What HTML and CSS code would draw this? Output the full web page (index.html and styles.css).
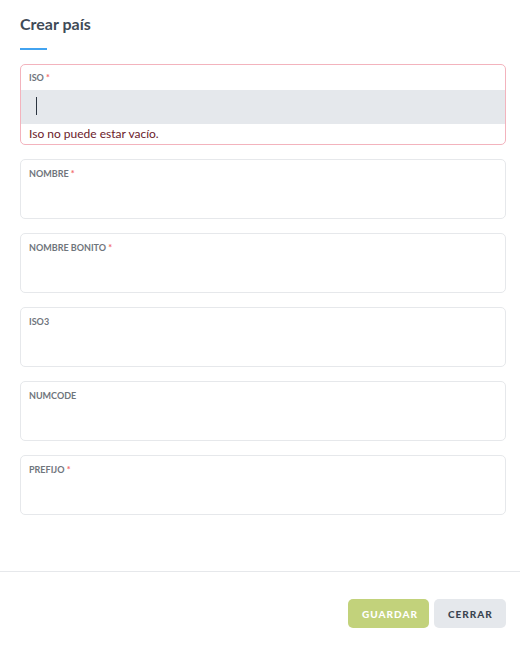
FILE: index.html
```html
<!DOCTYPE html>
<html lang="es">
<head>
    <meta charset="UTF-8">
    <meta name="viewport" content="width=device-width, initial-scale=1.0">
    <title>Crear país</title>
    <link rel="stylesheet" href="styles.css">
</head>
<body>
    <div class="modal">
        <div class="modal-body">
            <h2 class="modal-title">Crear país</h2>
            <div class="title-bar"></div>
            <form class="fields">
                <div class="field has-error">
                    <label for="iso">ISO <span class="req">*</span></label>
                    <div class="input-wrap"><input type="text" id="iso"><span class="caret"></span></div>
                    <div class="error-text">Iso no puede estar vacío.</div>
                </div>
                <div class="field">
                    <label for="nombre">NOMBRE <span class="req">*</span></label>
                    <input type="text" id="nombre">
                </div>
                <div class="field">
                    <label for="nombre-bonito">NOMBRE BONITO <span class="req">*</span></label>
                    <input type="text" id="nombre-bonito">
                </div>
                <div class="field">
                    <label for="iso3">ISO3</label>
                    <input type="text" id="iso3">
                </div>
                <div class="field">
                    <label for="numcode">NUMCODE</label>
                    <input type="text" id="numcode">
                </div>
                <div class="field">
                    <label for="prefijo">PREFIJO <span class="req">*</span></label>
                    <input type="text" id="prefijo">
                </div>
            </form>
        </div>
        <div class="modal-footer">
            <button type="button" class="btn btn-save">GUARDAR</button>
            <button type="button" class="btn btn-close">CERRAR</button>
        </div>
    </div>
</body>
</html>
```

FILE: styles.css
```css
:root {
    --text-dark: #3f4b57;
    --label-gray: #6f757c;
    --border-light: #e6e8eb;
    --input-gray: #e5e8ec;
    --error-border: #f3b3bd;
    --error-text: #6b1a2a;
    --accent: #42a3f0;
    --radius: 5px;
}
body {
    font-family: Lato, "Noto Sans", sans-serif;
    margin: 0;
    background-color: #fff;
    color: var(--text-dark);
}
.modal { width: 520px; height: 648px; display: flex; flex-direction: column; }
.modal-body { padding: 14px 14px 0 20px; flex: 1; }
.modal-title { margin: 0; font-size: 16px; line-height: 20px; font-weight: 700; color: var(--text-dark); }
.title-bar { width: 27px; height: 2px; background-color: var(--accent); margin-top: 14px; }
.fields { margin-top: 14px; display: flex; flex-direction: column; gap: 14px; }
.field {
    border: 1px solid var(--border-light);
    border-radius: var(--radius);
    height: 60px;
    box-sizing: border-box;
    overflow: hidden;
}
.field label {
    display: block;
    padding: 8px 8px 0;
    font-size: 9px;
    line-height: 12px;
    font-weight: 700;
    color: var(--label-gray);
}
.req { color: #f26a6a; }
.field input {
    display: block;
    width: 100%;
    border: 0;
    outline: 0;
    background: transparent;
    height: 34px;
    padding: 0 8px;
    box-sizing: border-box;
    font-family: inherit;
}
.field.has-error { border-color: var(--error-border); height: 81px; }
.field.has-error label { padding-top: 7px; height: 25px; box-sizing: border-box; }
.input-wrap { position: relative; background-color: var(--input-gray); }
.caret { position: absolute; left: 15px; top: 7px; width: 1px; height: 18px; background-color: #2b3440; }
.error-text { padding: 2px 8px 0; font-size: 12px; line-height: 16px; color: var(--error-text); }
.modal-footer {
    border-top: 1px solid var(--border-light);
    padding: 27px 14px 20px;
    display: flex;
    justify-content: flex-end;
    gap: 5px;
}
.btn {
    border: 0;
    border-radius: var(--radius);
    height: 29px;
    padding: 0 14px;
    font-family: inherit;
    font-size: 10px;
    font-weight: 900;
    letter-spacing: 1px;
    cursor: pointer;
}
.btn-save { background-color: #c2d27b; color: #fff; width: 81px; }
.btn-close { background-color: var(--input-gray); color: #3a4450; width: 72px; }
```
